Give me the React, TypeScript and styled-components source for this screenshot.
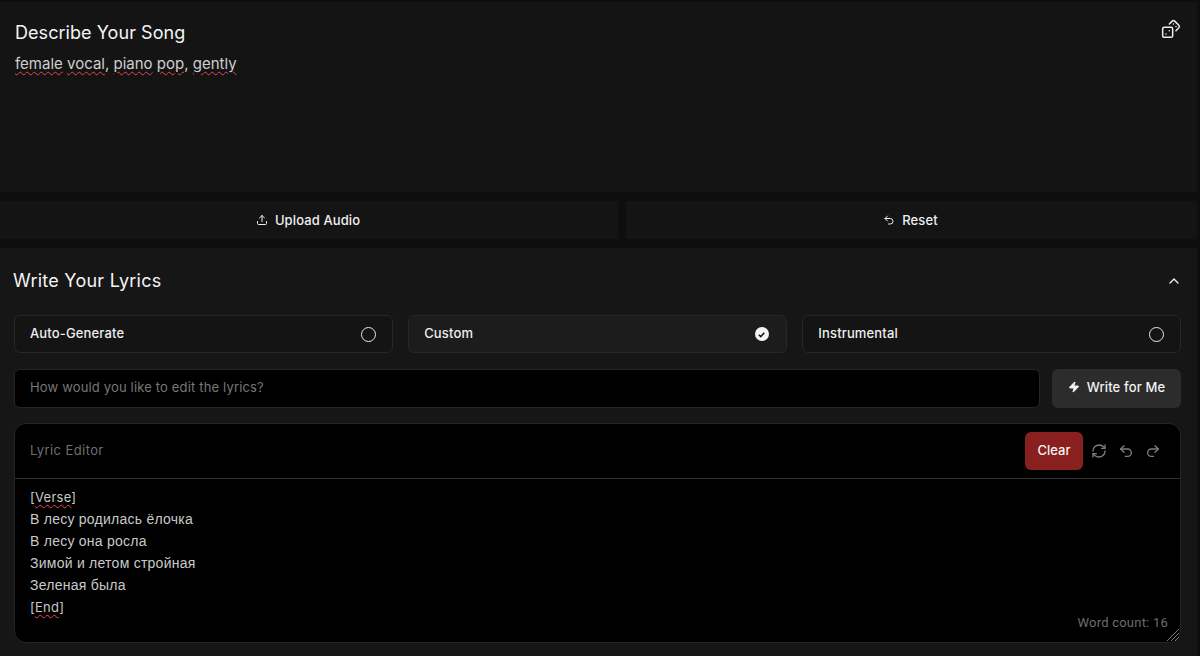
import React from "react";
import styled, { createGlobalStyle } from "styled-components";
import { ChevronUp, Upload, Undo2, Redo2, RefreshCw, Zap, Dices } from "lucide-react";

const Global = createGlobalStyle`
  html, body { margin: 0; padding: 0; background: #0e0e0e; height: 656px; overflow: hidden; }
  * { box-sizing: border-box; }
`;

const Page = styled.div`
  width: 1197px;
  height: 656px;
  padding-top: 2px;
  display: flex;
  flex-direction: column;
  gap: 9px;
  overflow: hidden;
  font-family: Inter, "Noto Sans", sans-serif;
  color: #f1f1f1;
`;

const DescribeCard = styled.section`
  height: 190px;
  flex: none;
  background: #141414;
  padding: 20px 15px;
  display: flex;
  flex-direction: column;
  gap: 9px;
`;

const CardHeader = styled.div`
  display: flex;
  justify-content: space-between;
  align-items: flex-start;
`;

const Title = styled.h2`
  margin: 0;
  font-size: 18px;
  line-height: 22px;
  font-weight: 400;
  letter-spacing: 0.05px;
  color: #f4f4f4;
`;

const Spell = styled.span`
  text-decoration: underline wavy #e5484d 1px;
  text-underline-offset: 2px;
`;

const Prompt = styled.p`
  margin: 0;
  font-size: 15px;
  line-height: 22px;
  color: #cfcfcf;
`;

const IconSlot = styled.span`
  display: inline-flex;
  color: #eeeeee;
  margin: -3px 1px 0 0;
`;

const ButtonRow = styled.div`
  display: grid;
  grid-template-columns: 618px 1fr;
  gap: 8px;
  height: 38px;
  flex: none;
`;

const WideButton = styled.button`
  background: #141414;
  border: 0;
  color: #eeeeee;
  font: 500 13px Inter, sans-serif;
  letter-spacing: 0.1px;
  display: flex;
  align-items: center;
  justify-content: center;
  gap: 7px;
  padding: 0 2px 0 0;
`;

const LyricsCard = styled.section`
  flex: 1;
  background: #161616;
  padding: 21px 16px 0 14px;
  display: flex;
  flex-direction: column;
`;

const LyricsHeader = styled.div`
  display: flex;
  justify-content: space-between;
  align-items: center;
  height: 24px;
  margin-bottom: 22px;
`;

const LyricsTitle = styled(Title)`
  margin-left: -1px;
  letter-spacing: 0.25px;
`;

const Chevron = styled.span`
  display: inline-flex;
  color: #eeeeee;
  margin-right: -1px;
`;

const Modes = styled.div`
  display: grid;
  grid-template-columns: repeat(3, 1fr);
  gap: 15.5px;
  margin-bottom: 16px;
`;

const Mode = styled.div<{ $active?: boolean }>`
  height: 38px;
  border-radius: 6px;
  border: 1px solid #272727;
  background: ${(p) => (p.$active ? "#1c1c1c" : "#141414")};
  display: flex;
  align-items: center;
  justify-content: space-between;
  padding: 0 16px 0 15px;
  font-size: 13px;
  font-weight: 500;
  letter-spacing: 0.15px;
  color: #eeeeee;
`;

const ModeLabel = styled.span`
  margin-bottom: 2px;
`;

const Radio = styled.span`
  width: 15px;
  height: 15px;
  border-radius: 50%;
  border: 1.7px solid #e8e8e8;
  flex: none;
`;

const Checked = styled.span`
  width: 14px;
  height: 14px;
  border-radius: 50%;
  background: #f4f4f4;
  display: inline-flex;
  align-items: center;
  justify-content: center;
  margin-right: 1px;
  flex: none;
`;

const EditRow = styled.div`
  display: flex;
  gap: 12px;
  margin-bottom: 15px;
`;

const EditInput = styled.div`
  flex: 1;
  height: 39px;
  background: #000;
  border: 1px solid #252525;
  border-radius: 6px;
  display: flex;
  align-items: center;
  padding: 0 15px 3px;
  font-size: 13px;
  letter-spacing: 0.16px;
  color: #777;
`;

const WriteButton = styled.button`
  width: 129px;
  height: 39px;
  background: #2c2c2c;
  border: 0;
  border-radius: 6px;
  color: #f1f1f1;
  font: 500 13px Inter, sans-serif;
  letter-spacing: 0.15px;
  display: flex;
  align-items: center;
  justify-content: center;
  gap: 7px;
  padding: 0 0 3px;
`;

const Editor = styled.div`
  position: relative;
  height: 220px;
  flex: none;
  background: #000;
  border: 1px solid #252525;
  border-radius: 12px;
  display: flex;
  flex-direction: column;
`;

const EditorBar = styled.div`
  height: 55px;
  flex: none;
  border-bottom: 1px solid #2e2e2e;
  display: flex;
  align-items: center;
  justify-content: space-between;
  padding: 0 19px 0 15px;
`;

const EditorLabel = styled.span`
  font-size: 13px;
  letter-spacing: 0.4px;
  color: #6f6f6f;
  margin-bottom: 2px;
`;

const Tools = styled.div`
  display: flex;
  align-items: center;
  gap: 11px;
`;

const ClearButton = styled.button`
  width: 58px;
  height: 38px;
  background: #8a1f1f;
  border: 0;
  border-radius: 6px;
  color: #f4f4f4;
  font: 500 13px Inter, sans-serif;
  margin: -1px -3px 0 0;
  padding: 0 0 1px;
`;

const ToolIcon = styled.span`
  display: inline-flex;
  color: #7d7d7d;
`;

const LyricsBody = styled.div`
  padding: 7px 15px 0;
  font-size: 13px;
  line-height: 22px;
  color: #c9c9c9;
`;

const LyricLine = styled.div<{ $cyr?: boolean }>`
  height: 22px;
  font-family: ${(p) => (p.$cyr ? '"Liberation Sans", sans-serif' : "Inter, sans-serif")};
  font-size: ${(p) => (p.$cyr ? "14px" : "13px")};
  letter-spacing: 0.25px;
`;

const WordCount = styled.span`
  position: absolute;
  right: 12px;
  bottom: 12px;
  font-family: Roboto, sans-serif;
  font-size: 13px;
  letter-spacing: 0.22px;
  color: #6c6c6c;
`;

const Grip = styled.svg`
  position: absolute;
  right: 0;
  bottom: 0;
`;

export default function App() {
  return (
    <Page>
      <Global />
      <DescribeCard>
        <CardHeader>
          <Title>Describe Your Song</Title>
          <IconSlot><Dices size={20} strokeWidth={1.8} /></IconSlot>
        </CardHeader>
        <Prompt>
          <Spell>female</Spell> <Spell>vocal</Spell>, <Spell>piano</Spell> <Spell>pop</Spell>, <Spell>gently</Spell>
        </Prompt>
      </DescribeCard>
      <ButtonRow>
        <WideButton><Upload size={12} />Upload Audio</WideButton>
        <WideButton><Undo2 size={12} />Reset</WideButton>
      </ButtonRow>
      <LyricsCard>
        <LyricsHeader>
          <LyricsTitle>Write Your Lyrics</LyricsTitle>
          <Chevron><ChevronUp size={16} /></Chevron>
        </LyricsHeader>
        <Modes>
          <Mode><ModeLabel>Auto-Generate</ModeLabel><Radio /></Mode>
          <Mode $active><ModeLabel>Custom</ModeLabel>
            <Checked>
              <svg width="9" height="9" viewBox="0 0 10 10" fill="none">
                <path d="M2 5.3 4.2 7.4 8 3" stroke="#161616" strokeWidth="1.8" />
              </svg>
            </Checked>
          </Mode>
          <Mode><ModeLabel>Instrumental</ModeLabel><Radio /></Mode>
        </Modes>
        <EditRow>
          <EditInput>How would you like to edit the lyrics?</EditInput>
          <WriteButton><Zap size={12} fill="currentColor" />Write for Me</WriteButton>
        </EditRow>
        <Editor>
          <EditorBar>
            <EditorLabel>Lyric Editor</EditorLabel>
            <Tools>
              <ClearButton>Clear</ClearButton>
              <ToolIcon><RefreshCw size={16} /></ToolIcon>
              <ToolIcon><Undo2 size={16} /></ToolIcon>
              <ToolIcon><Redo2 size={16} /></ToolIcon>
            </Tools>
          </EditorBar>
          <LyricsBody>
            <LyricLine>[<Spell>Verse</Spell>]</LyricLine>
            <LyricLine $cyr>В лесу родилась ёлочка</LyricLine>
            <LyricLine $cyr>В лесу она росла</LyricLine>
            <LyricLine $cyr>Зимой и летом стройная</LyricLine>
            <LyricLine $cyr>Зеленая была</LyricLine>
            <LyricLine>[<Spell>End</Spell>]</LyricLine>
          </LyricsBody>
          <WordCount>Word count: 16</WordCount>
          <Grip width="14" height="14" viewBox="0 0 14 14" stroke="#777" strokeWidth="1">
            <path d="M1 13 13 1M5 13 13 5M9 13 13 9" />
          </Grip>
        </Editor>
      </LyricsCard>
    </Page>
  );
}
